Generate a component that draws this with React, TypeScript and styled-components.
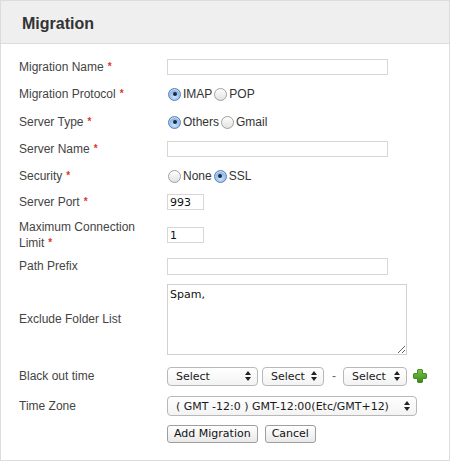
import React from "react";
import styled, { createGlobalStyle } from "styled-components";

const Global = createGlobalStyle`
  html, body { margin: 0; padding: 0; background: #fff; }
  * { box-sizing: border-box; }
`;

const Panel = styled.div`
  width: 450px;
  height: 461px;
  border: 1px solid #dcdcdc;
  font-family: "Liberation Sans", Arial, sans-serif;
  color: #444;
  background: #fff;
`;

const Header = styled.div`
  height: 43px;
  background: #efefef;
  border-bottom: 1px solid #dcdcdc;
  display: flex;
  align-items: center;
  padding: 3px 0 0 21px;
`;

const Title = styled.h1`
  margin: 0;
  font-size: 16px;
  font-weight: bold;
  color: #333;
`;

const Body = styled.div`
  padding: 10px 0 0 18px;
`;

const Row = styled.div<{ $h: number }>`
  display: grid;
  grid-template-columns: 148px 1fr;
  align-items: center;
  height: ${(p) => p.$h}px;
`;

const Label = styled.div`
  font-size: 12px;
  line-height: 15px;
  color: #444;
`;

const Req = styled.span`
  color: #e0332b;
  font-size: 10px;
  font-weight: bold;
  margin-left: 4px;
  vertical-align: 1px;
`;

const Controls = styled.div`
  display: flex;
  align-items: center;
`;

const TextInput = styled.input<{ $w: number; $h?: number }>`
  width: ${(p) => p.$w}px;
  height: ${(p) => p.$h ?? 16}px;
  border: 1px solid #d6d6d6;
  padding: 0 2px;
  margin: 0;
  font-family: "DejaVu Sans", sans-serif;
  font-size: 11px;
  color: #111;
  outline: none;
  background: #fff;
`;

const TextArea = styled.textarea`
  width: 240px;
  height: 71px;
  border: 1px solid #d0d0d0;
  padding: 3px 2px;
  margin: 0;
  font-family: "DejaVu Sans", sans-serif;
  font-size: 11px;
  color: #111;
  outline: none;
  resize: both;
`;

const RadioOpt = styled.label`
  display: inline-flex;
  align-items: center;
  font-family: "Liberation Sans", Arial, sans-serif;
  font-size: 12px;
  color: #333;
  margin-right: 1px;
`;

const RadioDot = styled.span<{ $on?: boolean }>`
  width: 13px;
  height: 13px;
  border-radius: 50%;
  margin: 0 2px 0 1px;
  display: inline-flex;
  align-items: center;
  justify-content: center;
  border: 1px solid ${(p) => (p.$on ? "#5a7fb0" : "#a0a0a0")};
  background: ${(p) =>
    p.$on
      ? "radial-gradient(circle at 50% 70%, #cde4fb 0%, #8fbbee 55%, #6b9fe0 100%)"
      : "linear-gradient(#fdfdfd, #e2e2e2)"};
  box-shadow: inset 0 1px 1px rgba(255, 255, 255, 0.7);
  &::after {
    content: "";
    display: ${(p) => (p.$on ? "block" : "none")};
    width: 4px;
    height: 4px;
    border-radius: 50%;
    background: #1c2a3a;
  }
`;

const SelectBox = styled.div<{ $w: number; $h?: number }>`
  width: ${(p) => p.$w}px;
  height: ${(p) => p.$h ?? 19}px;
  border: 1px solid #b8b8b8;
  border-radius: 4px;
  background: linear-gradient(#ffffff, #f3f3f3);
  display: flex;
  align-items: center;
  justify-content: space-between;
  padding: 0 6px 0 8px;
  font-family: "DejaVu Sans", sans-serif;
  font-size: 11px;
  color: #1a1a1a;
  margin-right: 4px;
  white-space: nowrap;
`;

const Dash = styled.span`
  font-size: 12px;
  color: #666;
  margin: 0 7px 0 4px;
`;

const Button = styled.button`
  height: 18px;
  padding: 0 6px;
  margin: 0 7px 0 0;
  border: 1px solid #9e9e9e;
  border-radius: 3px;
  background: linear-gradient(#ffffff, #e9e9e9);
  font-family: "DejaVu Sans", sans-serif;
  font-size: 11px;
  color: #111;
  line-height: 16px;
`;

const Arrows = () => (
  <svg width="6" height="10" viewBox="0 0 6 10">
    <path d="M0 4 L3 0 L6 4 Z M0 6 L3 10 L6 6 Z" fill="#222" />
  </svg>
);

const PlusIcon = () => (
  <svg width="16" height="16" viewBox="0 0 16 16" style={{ marginLeft: 1 }}>
    <defs>
      <linearGradient id="pg" x1="0" y1="0" x2="0" y2="1">
        <stop offset="0" stopColor="#7cc242" />
        <stop offset="1" stopColor="#3a8a1a" />
      </linearGradient>
    </defs>
    <path
      d="M6 1.5 H10 A1 1 0 0 1 10.5 2 V5.5 H14 A1 1 0 0 1 14.5 6 V10 A1 1 0 0 1 14 10.5 H10.5 V14 A1 1 0 0 1 10 14.5 H6 A1 1 0 0 1 5.5 14 V10.5 H2 A1 1 0 0 1 1.5 10 V6 A1 1 0 0 1 2 5.5 H5.5 V2 A1 1 0 0 1 6 1.5 Z"
      fill="url(#pg)"
      stroke="#2f7a14"
      strokeWidth="0.8"
    />
  </svg>
);

const Radio = ({ on, text }: { on?: boolean; text: string }) => (
  <RadioOpt>
    <RadioDot $on={on} />
    {text}
  </RadioOpt>
);

const Select = ({ w, text, h }: { w: number; text: string; h?: number }) => (
  <SelectBox $w={w} $h={h}>
    <span>{text}</span>
    <Arrows />
  </SelectBox>
);

export default function App() {
  return (
    <>
      <Global />
      <Panel>
        <Header>
          <Title>Migration</Title>
        </Header>
        <Body>
          <Row $h={26}>
            <Label>
              Migration Name<Req>*</Req>
            </Label>
            <Controls>
              <TextInput $w={221} />
            </Controls>
          </Row>
          <Row $h={28}>
            <Label>
              Migration Protocol<Req>*</Req>
            </Label>
            <Controls>
              <Radio on text="IMAP" />
              <Radio text="POP" />
            </Controls>
          </Row>
          <Row $h={28}>
            <Label>
              Server Type<Req>*</Req>
            </Label>
            <Controls>
              <Radio on text="Others" />
              <Radio text="Gmail" />
            </Controls>
          </Row>
          <Row $h={26}>
            <Label>
              Server Name<Req>*</Req>
            </Label>
            <Controls>
              <TextInput $w={221} />
            </Controls>
          </Row>
          <Row $h={28}>
            <Label>
              Security<Req>*</Req>
            </Label>
            <Controls>
              <Radio text="None" />
              <Radio on text="SSL" />
            </Controls>
          </Row>
          <Row $h={24}>
            <Label>
              Server Port<Req>*</Req>
            </Label>
            <Controls>
              <TextInput $w={37} defaultValue="993" />
            </Controls>
          </Row>
          <Row $h={42}>
            <Label>
              Maximum Connection
              <br />
              Limit<Req>*</Req>
            </Label>
            <Controls>
              <TextInput $w={37} defaultValue="1" />
            </Controls>
          </Row>
          <Row $h={20}>
            <Label>Path Prefix</Label>
            <Controls>
              <TextInput $w={221} $h={17} />
            </Controls>
          </Row>
          <Row $h={86}>
            <Label>Exclude Folder List</Label>
            <Controls>
              <TextArea defaultValue="Spam," />
            </Controls>
          </Row>
          <Row $h={28}>
            <Label>Black out time</Label>
            <Controls>
              <Select w={91} text="Select" />
              <Select w={62} text="Select" />
              <Dash>-</Dash>
              <Select w={64} text="Select" />
              <PlusIcon />
            </Controls>
          </Row>
          <Row $h={32}>
            <Label>Time Zone</Label>
            <Controls>
              <Select w={250} h={20} text="( GMT -12:0 ) GMT-12:00(Etc/GMT+12)" />
            </Controls>
          </Row>
          <Row $h={24}>
            <span />
            <Controls>
              <Button>Add Migration</Button>
              <Button>Cancel</Button>
            </Controls>
          </Row>
        </Body>
      </Panel>
    </>
  );
}
